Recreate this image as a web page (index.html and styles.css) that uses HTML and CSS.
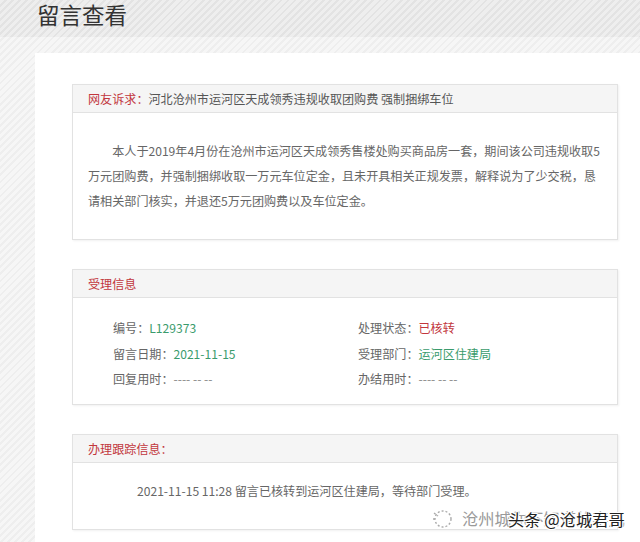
FILE: index.html
```html
<!DOCTYPE html>
<html lang="zh-CN">
<head>
<meta charset="utf-8">
<title>留言查看</title>
<link rel="stylesheet" href="styles.css">
</head>
<body>
<div class="header"><h1 class="title">留言查看</h1></div>
<div class="main">
  <section class="card">
    <div class="card-head"><span class="label">网友诉求：</span>河北沧州市运河区天成领秀违规收取团购费 强制捆绑车位</div>
    <div class="card-body content">
      <p class="para">本人于2019年4月份在沧州市运河区天成领秀售楼处购买商品房一套，期间该公司违规收取5万元团购费，并强制捆绑收取一万元车位定金，且未开具相关正规发票，解释说为了少交税，恳请相关部门核实，并退还5万元团购费以及车位定金。</p>
    </div>
  </section>
  <section class="card">
    <div class="card-head"><span class="label">受理信息</span></div>
    <div class="card-body info">
      <div class="info-item">编号：<span class="green">L129373</span></div>
      <div class="info-item">处理状态：<span class="red">已核转</span></div>
      <div class="info-item">留言日期：<span class="green">2021-11-15</span></div>
      <div class="info-item">受理部门：<span class="green">运河区住建局</span></div>
      <div class="info-item">回复用时：<span class="dash">---- -- --</span></div>
      <div class="info-item">办结用时：<span class="dash">---- -- --</span></div>
    </div>
  </section>
  <section class="card">
    <div class="card-head"><span class="label">办理跟踪信息：</span></div>
    <div class="card-body track">2021-11-15 11:28 留言已核转到运河区住建局，等待部门受理。</div>
  </section>
  <div class="watermark">
    <svg class="wm-icon" width="22" height="22" viewBox="0 0 22 22" fill="none" stroke="#aaa" stroke-width="1.4" stroke-dasharray="2 2">
      <circle cx="12" cy="12" r="8"/>
      <path d="M3 6 L7 9 M2 12 L6 12"/>
    </svg>
    <span class="wm-gray">沧州城你不知道的事儿</span>
    <span class="wm-black">头条 @沧城君哥</span>
  </div>
</div>
</body>
</html>
```
FILE: styles.css
```css
html, body {
  margin: 0;
  padding: 0;
}
body {
  width: 640px;
  height: 542px;
  overflow: hidden;
  font-family: "Noto Sans CJK SC", "Noto Sans", sans-serif;
  background: repeating-linear-gradient(135deg, #f6f6f6 0 3px, #eeeeee 3px 5px);
}
.header {
  height: 37px;
  padding-left: 37px;
  background: repeating-linear-gradient(135deg, #eeeeee 0 3px, #e3e3e3 3px 5px);
}
.title {
  margin: 0;
  font-size: 22.5px;
  font-weight: 400;
  line-height: 28px;
  color: #333;
}
.main {
  position: relative;
  margin: 16px 0 0 35px;
  background: #fff;
  height: 489px;
  padding: 31px 22px 0 37px;
  box-sizing: border-box;
}
.card {
  border: 1px solid #e2e2e2;
  box-shadow: 1px 1px 2px rgba(0,0,0,0.06);
  margin-bottom: 29px;
  color: #666;
}
.card-head {
  height: 27px;
  line-height: 27px;
  padding-left: 15px;
  background: #f5f5f5;
  border-bottom: 1px solid #e2e2e2;
  font-size: 12.1px;
  color: #555;
  white-space: nowrap;
}
.label {
  color: #c2373d;
}
.content {
  padding: 25px 12px 26px 15px;
}
.para {
  margin: 0;
  text-indent: 2em;
  font-size: 12.1px;
  line-height: 25px;
  color: #666;
}
.info {
  display: grid;
  grid-template-columns: 245px auto;
  padding: 17px 0 12px 40px;
  font-size: 12.1px;
  line-height: 25.5px;
  color: #666;
}
.green {
  color: #3a9b6c;
}
.red {
  color: #c2373d;
}
.dash {
  color: #888;
}
.track {
  padding: 15px 0 26px 64px;
  font-size: 12.1px;
  line-height: 25px;
  color: #666;
}
.watermark {
  position: absolute;
  left: 396px;
  top: 450px;
  width: 200px;
  height: 30px;
}
.wm-icon {
  position: absolute;
  left: 0;
  top: 4px;
}
.wm-gray {
  position: absolute;
  left: 31px;
  top: 0;
  font-size: 16.3px;
  line-height: 30px;
  color: #9a9a9a;
  white-space: nowrap;
}
.wm-black {
  position: absolute;
  left: 77px;
  top: 1px;
  font-size: 16.3px;
  line-height: 30px;
  color: #222;
  white-space: nowrap;
  text-shadow: 1px 1px 0 #fff, -1px -1px 0 #fff, 1px -1px 0 #fff, -1px 1px 0 #fff;
}
```
